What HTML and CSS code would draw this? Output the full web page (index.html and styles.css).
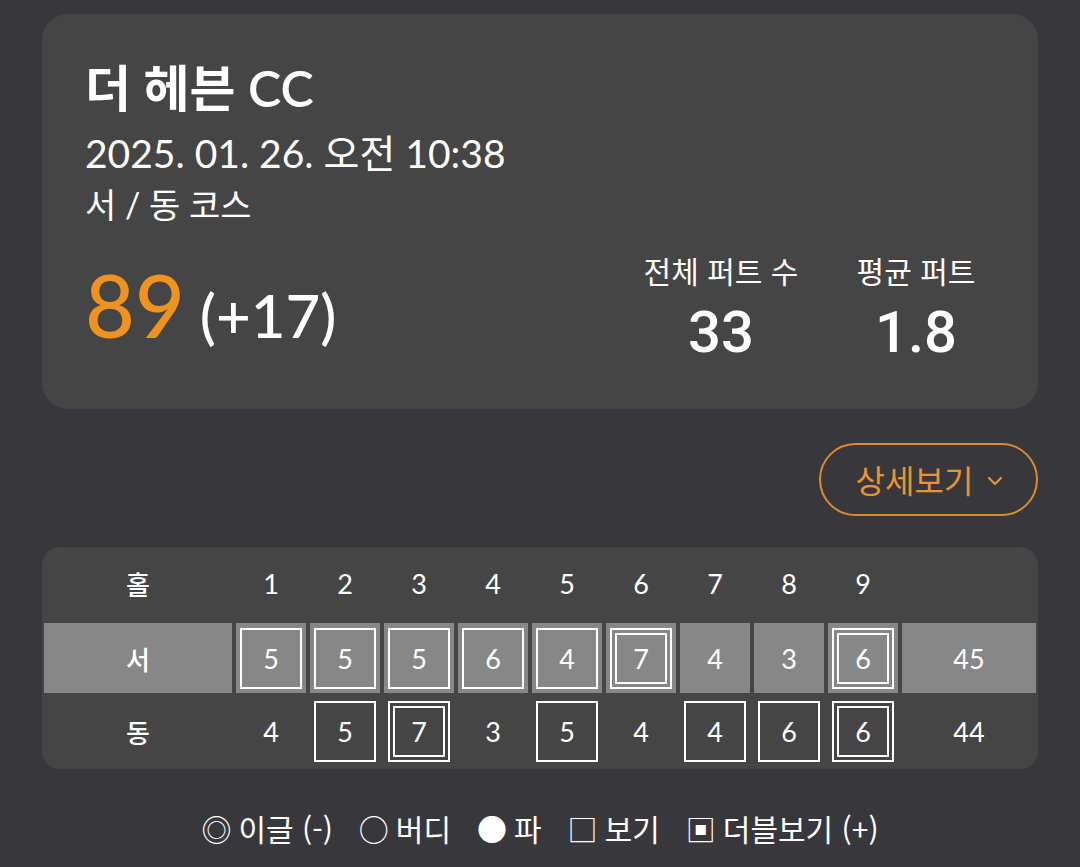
FILE: index.html
```html
<!DOCTYPE html>
<html lang="ko">
<head>
<meta charset="utf-8">
<title>스코어카드</title>
<link rel="stylesheet" href="styles.css">
</head>
<body>
<main class="page">
  <section class="summary">
    <h1 class="course-name">더 헤븐 CC</h1>
    <p class="date">2025. 01. 26. 오전 10:38</p>
    <p class="course">서 / 동 코스</p>
    <div class="result">
      <div class="score">
        <span class="strokes">89</span>
        <span class="over">(+17)</span>
      </div>
      <div class="stats">
        <div class="stat">
          <div class="stat-label">전체 퍼트 수</div>
          <div class="stat-value">33</div>
        </div>
        <div class="stat">
          <div class="stat-label">평균 퍼트</div>
          <div class="stat-value">1.8</div>
        </div>
      </div>
    </div>
  </section>

  <div class="actions">
    <button class="detail-btn" type="button">
      <span>상세보기</span>
      <svg class="chev" width="16" height="10" viewBox="0 0 16 10"><path d="M2 2 L8 8 L14 2" fill="none" stroke="currentColor" stroke-width="2.2" stroke-linecap="round" stroke-linejoin="round"/></svg>
    </button>
  </div>

  <section class="card-table">
    <div class="grid">
      <div class="cell head label">홀</div>
      <div class="cell head">1</div>
      <div class="cell head">2</div>
      <div class="cell head">3</div>
      <div class="cell head">4</div>
      <div class="cell head">5</div>
      <div class="cell head">6</div>
      <div class="cell head">7</div>
      <div class="cell head">8</div>
      <div class="cell head">9</div>
      <div class="cell head"></div>

      <div class="cell west label">서</div>
      <div class="cell west"><span class="box">5</span></div>
      <div class="cell west"><span class="box">5</span></div>
      <div class="cell west"><span class="box">5</span></div>
      <div class="cell west"><span class="box">6</span></div>
      <div class="cell west"><span class="box">4</span></div>
      <div class="cell west"><span class="box dbl"><span class="inner">7</span></span></div>
      <div class="cell west">4</div>
      <div class="cell west">3</div>
      <div class="cell west"><span class="box dbl"><span class="inner">6</span></span></div>
      <div class="cell west">45</div>

      <div class="cell east label">동</div>
      <div class="cell east">4</div>
      <div class="cell east"><span class="box">5</span></div>
      <div class="cell east"><span class="box dbl"><span class="inner">7</span></span></div>
      <div class="cell east">3</div>
      <div class="cell east"><span class="box">5</span></div>
      <div class="cell east">4</div>
      <div class="cell east"><span class="box">4</span></div>
      <div class="cell east"><span class="box">6</span></div>
      <div class="cell east"><span class="box dbl"><span class="inner">6</span></span></div>
      <div class="cell east">44</div>
    </div>
  </section>

  <ul class="legend">
    <li><span class="sym">◎</span>이글 (-)</li>
    <li><span class="sym">○</span>버디</li>
    <li><span class="sym">●</span>파</li>
    <li><span class="sym">□</span>보기</li>
    <li><span class="sym">▣</span>더블보기 (+)</li>
  </ul>
</main>
</body>
</html>
```

FILE: styles.css
```css
* { box-sizing: border-box; }

html, body {
  margin: 0;
  padding: 0;
  background: #38373c;
  color: #ffffff;
  font-family: Lato, "Noto Sans CJK KR", sans-serif;
}

.page {
  width: 1080px;
  padding: 14px 42px 0 42px;
}

.summary {
  background: #454545;
  border-radius: 26px;
  padding: 45px 42px 45px 43px;
}

.course-name {
  margin: 0;
  font-size: 50px;
  line-height: 58px;
  font-weight: 600;
}

.date {
  margin: 12px 0 0;
  font-size: 39px;
  line-height: 48px;
  font-weight: 400;
}

.course {
  margin: 6px 0 0;
  font-size: 34px;
  line-height: 44px;
}

.result {
  margin-top: 13px;
  display: flex;
  justify-content: space-between;
  align-items: flex-start;
}

.score {
  margin-top: 20px;
  display: flex;
  align-items: baseline;
}

.strokes {
  color: #f0931e;
  font-size: 86px;
  line-height: 90px;
  font-weight: 500;
}

.over {
  margin-left: 15px;
  font-size: 60px;
  line-height: 90px;
  font-weight: 500;
}

.stats {
  display: flex;
  gap: 35px;
  padding-top: 10px;
}

.stat {
  width: 160px;
  text-align: center;
}

.stat-label {
  font-family: "Noto Sans CJK KR", sans-serif;
  font-size: 30px;
  line-height: 40px;
}

.stat-value {
  margin-top: 10px;
  font-family: Roboto, sans-serif;
  font-weight: 500;
  font-size: 58px;
  line-height: 64px;
}

.actions {
  display: flex;
  justify-content: flex-end;
  margin-top: 34px;
}

.detail-btn {
  width: 219px;
  height: 73px;
  border: 2.5px solid #d98b2f;
  border-radius: 37px;
  background: transparent;
  color: #e8952f;
  font-family: "Noto Sans CJK KR", sans-serif;
  font-size: 32px;
  display: flex;
  align-items: center;
  justify-content: center;
  gap: 14px;
  padding: 0 0 2px 2px;
}

.chev { margin-top: 4px; }

.card-table {
  margin-top: 31px;
  background: #454545;
  border-radius: 18px;
  padding: 0 2px;
  overflow: hidden;
}

.grid {
  display: grid;
  grid-template-columns: 188px repeat(9, 70px) 134px;
  grid-template-rows: 76px 70px 76px;
  column-gap: 4px;
}

.cell {
  display: flex;
  align-items: center;
  justify-content: center;
  font-size: 27px;
}

.label {
  font-family: "Noto Sans CJK KR", sans-serif;
  font-weight: 500;
  font-size: 26px;
}

.head { padding-bottom: 4px; }

.west { background: #878787; }

.box {
  width: 62px;
  height: 61px;
  border: 2px solid #ffffff;
  display: flex;
  align-items: center;
  justify-content: center;
}

.box.dbl { padding: 3px; }

.inner {
  width: 100%;
  height: 100%;
  border: 2px solid #ffffff;
  display: flex;
  align-items: center;
  justify-content: center;
}

.legend {
  list-style: none;
  margin: 39px 0 0;
  padding: 0;
  display: flex;
  justify-content: center;
  gap: 26px;
  font-family: "Noto Sans CJK KR", sans-serif;
  font-size: 30px;
  line-height: 40px;
}

.legend li {
  display: flex;
  align-items: center;
}

.sym {
  margin-right: 7px;
}
```
